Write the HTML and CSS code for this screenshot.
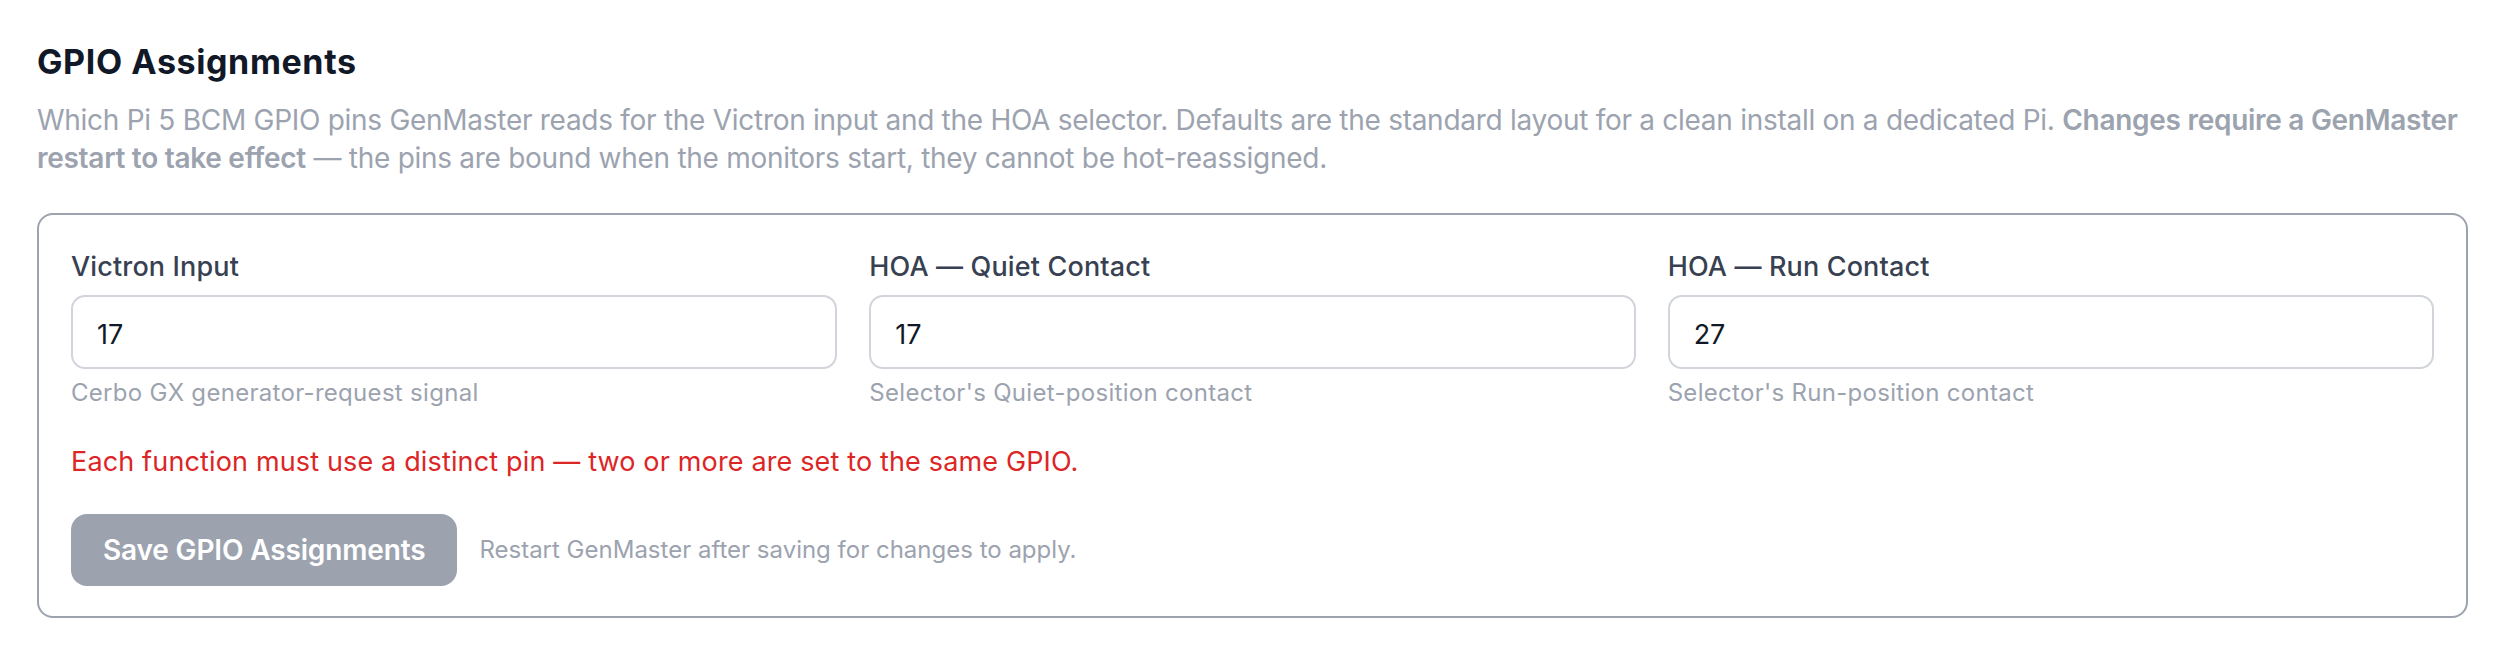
FILE: index.html
```html
<!DOCTYPE html>
<html lang="en">
  <head>
    <meta charset="UTF-8" />
    <meta name="viewport" content="width=device-width, initial-scale=1.0" />
    <title>GPIO Assignments</title>
    <link rel="stylesheet" href="styles.css">
  </head>
  <body>
    <section class="settings-section">
      <h2 class="section-title">GPIO Assignments</h2>
      <p class="section-description">
        Which Pi 5 BCM GPIO pins GenMaster reads for the Victron input and the HOA selector. Defaults are the standard layout for a clean install on a dedicated Pi.
        <strong>Changes require a GenMaster restart to take effect</strong> — the pins are bound when the monitors start, they cannot be hot-reassigned.
      </p>

      <div class="gpio-card">
        <div class="gpio-grid">
          <div class="field">
            <label class="field-label" for="victron-pin">Victron Input</label>
            <input class="field-input" id="victron-pin" type="text" value="17" />
            <div class="field-help">Cerbo GX generator-request signal</div>
          </div>

          <div class="field">
            <label class="field-label" for="quiet-pin">HOA — Quiet Contact</label>
            <input class="field-input" id="quiet-pin" type="text" value="17" />
            <div class="field-help">Selector's Quiet-position contact</div>
          </div>

          <div class="field">
            <label class="field-label" for="run-pin">HOA — Run Contact</label>
            <input class="field-input" id="run-pin" type="text" value="27" />
            <div class="field-help">Selector's Run-position contact</div>
          </div>
        </div>

        <p class="gpio-error">Each function must use a distinct pin — two or more are set to the same GPIO.</p>

        <div class="gpio-actions">
          <button class="save-btn" type="button" disabled>Save GPIO Assignments</button>
          <span class="save-note">Restart GenMaster after saving for changes to apply.</span>
        </div>
      </div>
    </section>
  </body>
</html>
```

FILE: styles.css
```css
* {
    margin: 0;
    padding: 0;
    box-sizing: border-box;
}

body {
    font-family: Inter, 'Noto Sans', sans-serif;
    background: #ffffff;
    color: #111827;
    padding: 42px 28px 0 37px;
}

.section-title {
    font-size: 34px;
    line-height: 40px;
    font-weight: 700;
    letter-spacing: 0.6px;
    color: #111827;
}

.section-description {
    margin-top: 19px;
    font-size: 28px;
    line-height: 38px;
    letter-spacing: -0.28px;
    color: #9ca3af;
}

.section-description strong {
    font-weight: 600;
}

.gpio-card {
    margin-top: 36px;
    border: 2px solid #9ca3af;
    border-radius: 16px;
    padding: 32px 32px 30px 32px;
}

.gpio-grid {
    display: grid;
    grid-template-columns: repeat(3, 1fr);
    gap: 32px;
}

.field {
    display: flex;
    flex-direction: column;
}

.field-label {
    font-size: 27px;
    line-height: 40px;
    font-weight: 500;
    letter-spacing: 0.15px;
    color: #374151;
}

.field-input {
    margin-top: 8px;
    height: 74px;
    padding: 16px 24px 12px 24px;
    border: 2px solid #d1d5db;
    border-radius: 14px;
    font-family: inherit;
    font-size: 27px;
    line-height: 38px;
    color: #111827;
    background: #ffffff;
    outline: none;
}

.field-help {
    margin-top: 8px;
    font-size: 24px;
    line-height: 32px;
    letter-spacing: 0.3px;
    color: #9ca3af;
}

.gpio-error {
    margin-top: 34px;
    font-size: 27px;
    line-height: 38px;
    letter-spacing: 0.15px;
    color: #dc2626;
}

.gpio-actions {
    margin-top: 33px;
    display: flex;
    align-items: center;
    gap: 22px;
}

.save-btn {
    padding: 17px 32px;
    border: none;
    border-radius: 16px;
    background: #9ca3af;
    color: #ffffff;
    font-family: inherit;
    font-size: 28px;
    line-height: 38px;
    font-weight: 600;
    letter-spacing: -0.15px;
    cursor: not-allowed;
}

.save-note {
    font-size: 24px;
    line-height: 32px;
    color: #9ca3af;
}
```
